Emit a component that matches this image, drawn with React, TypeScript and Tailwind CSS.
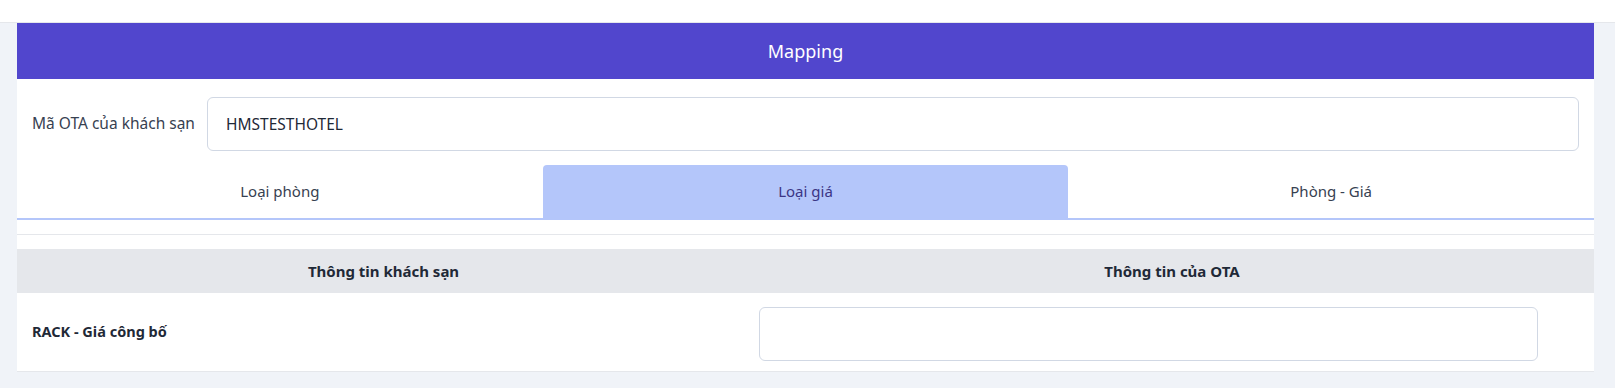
import { useState } from "react";

const TABS = ["Loại phòng", "Loại giá", "Phòng - Giá"];

export default function App() {
  const [tab, setTab] = useState(1);

  return (
    <div
      className="min-h-[388px] bg-[#f0f3f8] text-[#374151]"
      style={{ fontFamily: '"Segoe UI", "Noto Sans", sans-serif' }}
    >
      {/* top bar */}
      <div className="h-[23px] bg-white border-b border-[#e5e7eb]" />

      <div className="ml-[17px] mr-[21px] bg-white">
        <div className="h-[56px] bg-[#5146cd] flex items-center justify-center text-white text-[18px]">
          Mapping
        </div>

        <div className="flex items-center pl-[15px] pr-[15px] pt-[18px]">
          <label className="w-[175px] text-[15.5px] text-[#374151]">Mã OTA của khách sạn</label>
          <input
            defaultValue="HMSTESTHOTEL"
            className="flex-1 h-[54px] rounded-md border border-[#d1d8e4] px-[18px] text-[15.5px] text-[#1f2937] outline-none"
          />
        </div>

        <div className="mt-[14px] grid grid-cols-3 border-b-2 border-[#b4c6fa]">
          {TABS.map((t, i) => (
            <button
              key={t}
              onClick={() => setTab(i)}
              className={
                i === tab
                  ? "h-[53px] rounded-t-[4px] bg-[#b4c6fa] text-[15px] text-[#3b3585]"
                  : "h-[53px] text-[15px] text-[#374151]"
              }
            >
              {t}
            </button>
          ))}
        </div>

        <div className="h-[15px] border-b border-[#e5e7eb]" />

        <div className="mt-[14px]">
          <div className="grid grid-cols-[733px_1fr] h-[44px] bg-[#e5e7eb] items-center text-[15px] font-bold text-[#1f2937]">
            <div className="text-center">Thông tin khách sạn</div>
            <div className="text-center">Thông tin của OTA</div>
          </div>
          <div className="grid grid-cols-[733px_1fr] h-[79px] items-center border-b border-[#e5e7eb]">
            <div className="pl-[15px] text-[14.5px] font-bold text-[#1f2937]">RACK - Giá công bố</div>
            <div className="pl-[9px] pt-[4px]">
              <input className="w-[779px] h-[54px] rounded-md border border-[#d1d8e4] px-3 outline-none" />
            </div>
          </div>
        </div>
      </div>
    </div>
  );
}
